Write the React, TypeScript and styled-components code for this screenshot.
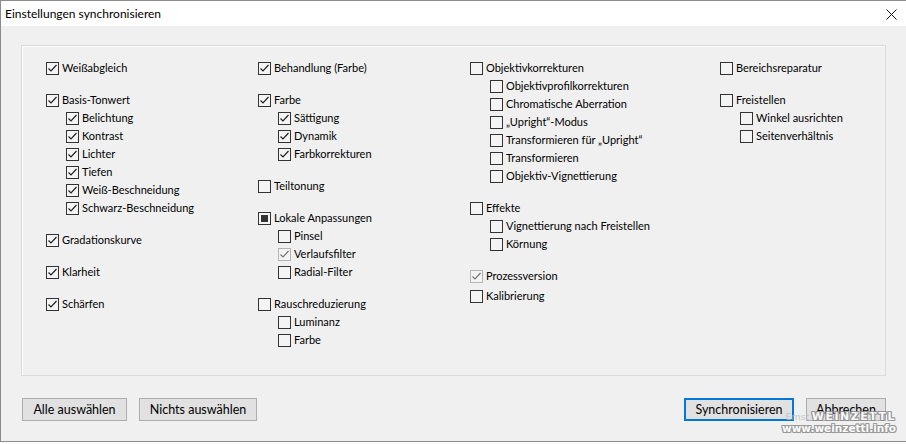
import React from "react";
import styled, { createGlobalStyle } from "styled-components";

const GlobalStyle = createGlobalStyle`
    html, body {
        margin: 0;
        padding: 0;
        background: #ffffff;
    }
    body {
        font-family: Lato, "Noto Sans", sans-serif;
        font-size: 11px;
        color: #000;
    }
`;

type State = "on" | "off" | "mixed";

interface Item {
    label: string;
    state: State;
    dim?: boolean;
    children?: Item[];
    extraTop?: number;
}

const columns: Item[][] = [
    [
        { label: "Weißabgleich", state: "on" },
        {
            label: "Basis-Tonwert", state: "on", children: [
                { label: "Belichtung", state: "on" },
                { label: "Kontrast", state: "on" },
                { label: "Lichter", state: "on" },
                { label: "Tiefen", state: "on" },
                { label: "Weiß-Beschneidung", state: "on" },
                { label: "Schwarz-Beschneidung", state: "on" },
            ]
        },
        { label: "Gradationskurve", state: "on" },
        { label: "Klarheit", state: "on" },
        { label: "Schärfen", state: "on" },
    ],
    [
        { label: "Behandlung (Farbe)", state: "on" },
        {
            label: "Farbe", state: "on", children: [
                { label: "Sättigung", state: "on" },
                { label: "Dynamik", state: "on" },
                { label: "Farbkorrekturen", state: "on" },
            ]
        },
        { label: "Teiltonung", state: "off" },
        {
            label: "Lokale Anpassungen", state: "mixed", children: [
                { label: "Pinsel", state: "off" },
                { label: "Verlaufsfilter", state: "on", dim: true },
                { label: "Radial-Filter", state: "off" },
            ]
        },
        {
            label: "Rauschreduzierung", state: "off", children: [
                { label: "Luminanz", state: "off" },
                { label: "Farbe", state: "off" },
            ]
        },
    ],
    [
        {
            label: "Objektivkorrekturen", state: "off", children: [
                { label: "Objektivprofilkorrekturen", state: "off" },
                { label: "Chromatische Aberration", state: "off" },
                { label: "„Upright“-Modus", state: "off" },
                { label: "Transformieren für „Upright“", state: "off" },
                { label: "Transformieren", state: "off" },
                { label: "Objektiv-Vignettierung", state: "off" },
            ]
        },
        {
            label: "Effekte", state: "off", children: [
                { label: "Vignettierung nach Freistellen", state: "off" },
                { label: "Körnung", state: "off" },
            ]
        },
        { label: "Prozessversion", state: "on", dim: true },
        { label: "Kalibrierung", state: "off", extraTop: -12 },
    ],
    [
        { label: "Bereichsreparatur", state: "off" },
        {
            label: "Freistellen", state: "off", children: [
                { label: "Winkel ausrichten", state: "off" },
                { label: "Seitenverhältnis", state: "off" },
            ]
        },
    ],
];

const Window = styled.div`
    position: relative;
    width: 906px;
    height: 442px;
    box-sizing: border-box;
    border: 1px solid #8c8c8c;
    border-right: none;
    background: #f0f0f0;
    display: flex;
    flex-direction: column;
    overflow: hidden;
`;

const TitleBar = styled.div`
    height: 25px;
    background: #fff;
    display: flex;
    align-items: center;
    justify-content: space-between;
    padding: 0 9px 0 4px;
    flex-shrink: 0;
`;

const TitleText = styled.span`
    font-size: 12px;
    color: #000;
    margin-top: -1px;
`;

const CloseIcon = styled.svg`
    width: 11px;
    height: 11px;
    margin-top: 1px;
`;

const Body = styled.div`
    flex: 1;
    display: flex;
    flex-direction: column;
    padding: 19px 20px 0 20px;
`;

const Panel = styled.div`
    height: 331px;
    box-sizing: border-box;
    border: 1px solid #dadada;
    box-shadow: inset 1px 1px 0 #fbfbfb;
    padding: 13px 0 0 24px;
    display: grid;
    grid-template-columns: 212px 212px 250px 1fr;
    align-items: start;
`;

const Column = styled.div`
    display: flex;
    flex-direction: column;
`;

const Group = styled.div<{ $gap: number }>`
    display: flex;
    flex-direction: column;
    margin-top: ${p => p.$gap}px;
    &:first-child {
        margin-top: 0;
    }
`;

const Row = styled.div<{ $indent: boolean }>`
    height: 18px;
    display: flex;
    align-items: center;
    padding-left: ${p => (p.$indent ? 20 : 0)}px;
    white-space: nowrap;
`;

const Box = styled.span<{ $dim?: boolean }>`
    width: 13px;
    height: 13px;
    box-sizing: border-box;
    border: 1px solid ${p => (p.$dim ? "#b4b4b4" : "#333")};
    background: #f4f4f4;
    display: inline-flex;
    align-items: center;
    justify-content: center;
    margin-right: 3px;
    flex-shrink: 0;
`;

const Mixed = styled.span`
    width: 7px;
    height: 7px;
    background: #333;
`;

const Label = styled.span`
    color: #000;
    line-height: 16px;
`;

const Footer = styled.div`
    display: flex;
    align-items: center;
    margin-top: 22px;
    padding-left: 1px;
    gap: 12px;
`;

const Spacer = styled.div`
    flex: 1;
`;

const Button = styled.button<{ $primary?: boolean; $w: number }>`
    width: ${p => p.$w}px;
    height: 23px;
    box-sizing: border-box;
    font-family: inherit;
    font-size: 12.5px;
    color: #000;
    background: #e1e1e1;
    border: ${p => (p.$primary ? "2px solid #0078d7" : "1px solid #adadad")};
    padding: 0;
    margin: 0;
`;

const Watermark = styled.div`
    position: absolute;
    right: 10px;
    bottom: 8px;
    display: flex;
    flex-direction: column;
    align-items: flex-end;
    font-family: "DejaVu Sans", sans-serif;
    font-weight: bold;
    color: #fff;
    text-shadow: 1px 0 0 #8a8a8a, -1px 0 0 #8a8a8a, 0 1px 0 #8a8a8a, 0 -1px 0 #8a8a8a,
        1px 1px 0 #8a8a8a, -1px -1px 0 #8a8a8a, 1px -1px 0 #8a8a8a, -1px 1px 0 #8a8a8a;
    opacity: 0.85;
    pointer-events: none;
`;

const WmTop = styled.span`
    font-size: 11px;
    line-height: 9px;
    letter-spacing: 1.5px;
`;

const WmSmall = styled.span`
    font-size: 9px;
    font-weight: normal;
    letter-spacing: 0;
    color: #bdbdbd;
    text-shadow: none;
`;

const WmBottom = styled.span`
    font-size: 10.5px;
    line-height: 9px;
    margin-top: 2px;
`;

const Check = ({ dim }: { dim?: boolean }) => (
    <svg width="11" height="11" viewBox="0 0 11 11">
        <path d="M1.5 5.5 L4 8 L9.5 2" fill="none" stroke={dim ? "#777" : "#222"} strokeWidth="1.2" />
    </svg>
);

const CheckRow = ({ item, indent }: { item: Item; indent: boolean }) => (
    <Row $indent={indent}>
        <Box $dim={item.dim}>
            {item.state === "on" && <Check dim={item.dim} />}
            {item.state === "mixed" && <Mixed />}
        </Box>
        <Label>{item.label}</Label>
    </Row>
);

export default function App() {
    return (
        <Window>
            <GlobalStyle />
            <TitleBar>
                <TitleText>Einstellungen synchronisieren</TitleText>
                <CloseIcon viewBox="0 0 11 11">
                    <path d="M0.5 0.5 L10.5 10.5 M10.5 0.5 L0.5 10.5" stroke="#111" strokeWidth="1" fill="none" />
                </CloseIcon>
            </TitleBar>
            <Body>
                <Panel>
                    {columns.map((col, ci) => (
                        <Column key={ci}>
                            {col.map((item, gi) => (
                                <Group key={gi} $gap={14 + (item.extraTop || 0)}>
                                    <CheckRow item={item} indent={false} />
                                    {item.children && item.children.map((c, k) => (
                                        <CheckRow key={k} item={c} indent={true} />
                                    ))}
                                </Group>
                            ))}
                        </Column>
                    ))}
                </Panel>
                <Footer>
                    <Button $w={105}>Alle auswählen</Button>
                    <Button $w={118}>Nichts auswählen</Button>
                    <Spacer />
                    <Button $w={110} $primary>Synchronisieren</Button>
                    <Button $w={80}>Abbrechen</Button>
                </Footer>
            </Body>
            <Watermark>
                <WmTop><WmSmall>Ernst </WmSmall>WEINZETTL</WmTop>
                <WmBottom>www.weinzettl.info</WmBottom>
            </Watermark>
        </Window>
    );
}
